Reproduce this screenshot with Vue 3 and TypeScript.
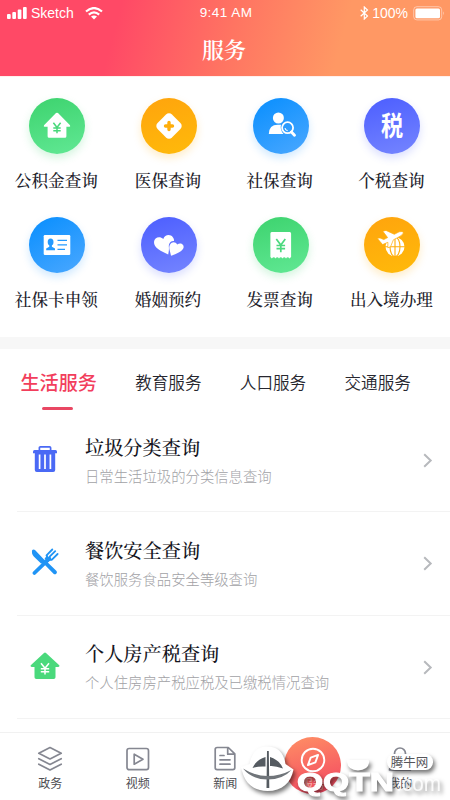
<script setup lang="ts">
import { ref } from 'vue'

interface Service {
  icon: string
  label: string
  tone: string
}

interface Entry {
  icon: string
  title: string
  desc: string
}

const services: Service[] = [
  { icon: 'house', label: '公积金查询', tone: 'green' },
  { icon: 'medical', label: '医保查询', tone: 'orange' },
  { icon: 'person', label: '社保查询', tone: 'blue' },
  { icon: 'tax', label: '个税查询', tone: 'indigo' },
  { icon: 'card', label: '社保卡申领', tone: 'blue' },
  { icon: 'hearts', label: '婚姻预约', tone: 'indigo' },
  { icon: 'receipt', label: '发票查询', tone: 'green' },
  { icon: 'travel', label: '出入境办理', tone: 'orange' },
]

const tabs = ['生活服务', '教育服务', '人口服务', '交通服务']
const activeTab = ref(0)

const entries: Entry[] = [
  { icon: 'trash', title: '垃圾分类查询', desc: '日常生活垃圾的分类信息查询' },
  { icon: 'food', title: '餐饮安全查询', desc: '餐饮服务食品安全等级查询' },
  { icon: 'home', title: '个人房产税查询', desc: '个人住房房产税应税及已缴税情况查询' },
]

const navItems = [
  { icon: 'layers', label: '政务' },
  { icon: 'video', label: '视频' },
  { icon: 'news', label: '新闻' },
  { icon: 'compass', label: '服务' },
  { icon: 'user', label: '我的' },
]
</script>

<template>
  <div class="screen">
    <header class="header">
      <div class="status">
        <div class="carrier">
          <svg class="signal" width="20" height="12" viewBox="0 0 20 12" fill="#fff">
            <rect x="0" y="7" width="3.7" height="5" rx="1" />
            <rect x="5.3" y="5" width="3.7" height="7" rx="1" />
            <rect x="10.7" y="2.6" width="3.7" height="9.4" rx="1" />
            <rect x="16" y="0" width="3.7" height="12" rx="1" />
          </svg>
          <span>Sketch</span>
          <svg class="wifi" width="18" height="13" viewBox="0 0 18 13" fill="none" stroke="#fff" stroke-width="2.2">
            <path d="M1 4.5Q9-2.4 17 4.5M3.8 7.6Q9 3 14.2 7.6" />
            <path d="M9 12.5L6 9.6Q9 7.4 12 9.6Z" fill="#fff" stroke="none" />
          </svg>
        </div>
        <span class="clock">9:41 AM</span>
        <div class="power">
          <svg width="9" height="14" viewBox="0 0 9 14" fill="none" stroke="#fff" stroke-width="1.2">
            <path d="M.7 3.8L7.5 10 4.3 13V1L7.5 4 .7 10.2" />
          </svg>
          <span>100%</span>
          <svg class="battery" width="32" height="15" viewBox="0 0 32 15">
            <rect x=".7" y=".7" width="28" height="13.2" rx="3.2" fill="none" stroke="#fff" stroke-opacity=".45" />
            <rect x="2.4" y="2.5" width="24.6" height="9.8" rx="1.5" fill="#fff" />
            <path d="M30.2 5.2Q31.8 7.3 30.2 9.4Z" fill="#fff" fill-opacity=".6" />
          </svg>
        </div>
      </div>
      <h1>服务</h1>
    </header>

    <section class="services">
      <div v-for="s in services" :key="s.label" class="service">
        <div class="disc" :class="s.tone">
          <svg width="56" height="56" viewBox="0 0 56 56" fill="#fff">
            <g v-if="s.icon === 'house'">
              <path d="M27 15.1Q28 14.2 29 15.1L41 27.2Q41.7 28.7 40.3 28.7H37.4V38.2Q37.4 39.7 35.9 39.7H20.1Q18.6 39.7 18.6 38.2V28.7H15.7Q14.3 28.7 15 27.2Z" />
              <path d="M24.4 24.8L28 29.5 31.6 24.8M28 29.5V35.3M24.3 30H31.7M24.3 32.8H31.7" fill="none" stroke="#48d87a" stroke-width="1.5" />
            </g>
            <g v-else-if="s.icon === 'medical'">
              <rect x="17.8" y="17.8" width="20.4" height="20.4" rx="4.2" transform="rotate(45 28 28)" />
              <path d="M28 24.5V31.5M24.5 28H31.5" stroke="#ffae0a" stroke-width="3.4" stroke-linecap="round" />
            </g>
            <g v-else-if="s.icon === 'person'">
              <circle cx="25.4" cy="20" r="5.5" />
              <path d="M15.8 36Q16 26.7 24.8 26.7H28Q26.7 31.5 30.5 36Z" />
              <circle cx="34.6" cy="29.7" r="5.5" fill="none" stroke="#fff" stroke-width="1.8" />
              <path d="M32 30Q32.3 32.2 34.6 32.6" fill="none" stroke="#fff" stroke-width="1.1" />
              <path d="M38.4 34L41.5 37.2" stroke="#fff" stroke-width="2.9" stroke-linecap="round" />
            </g>
            <g v-else-if="s.icon === 'tax'">
              <text class="tax-mark" transform="translate(28 37.7) scale(.82 1)" text-anchor="middle">税</text>
            </g>
            <g v-else-if="s.icon === 'card'">
              <rect x="14.7" y="18" width="26.6" height="20" rx="1.2" />
              <g fill="#249aff">
                <ellipse cx="21.6" cy="25" rx="2.9" ry="3.5" />
                <path d="M20.3 27H22.9V29.7L26 31.5V33.2H17.2V31.5L20.3 29.7Z" />
                <path d="M28.5 22.7H38V24.1H28.5ZM28.5 27.2H38V28.6H28.5ZM28.5 31.7H36V33.1H28.5Z" />
              </g>
            </g>
            <g v-else-if="s.icon === 'hearts'">
              <path d="M27.2 37.5C20.5 34.5 12.6 30.7 13 25C13.3 20.3 18.8 18.6 22.3 22C23.6 17.6 29.4 16.7 32 20.4C33 22 33.2 23.1 32.9 24C29.5 23.3 27.4 26.8 27.9 30.2C28.2 33 27.5 35.4 27.2 37.5Z" />
              <path d="M30 38.8C29.4 34.5 27.1 30.8 29.1 27.5C30.9 24.5 34.6 24.5 36.2 27.6C39.3 24.9 43.2 27.2 42.6 30.6C42 34.3 35.5 36.9 30 38.8Z" />
            </g>
            <g v-else-if="s.icon === 'receipt'">
              <path d="M18.7 15H36.8Q38.1 15 38.1 16.5V40L36.4 41.6Q34.8 38.7 33 41.6Q31.3 38.7 29.5 41.6Q27.8 38.7 26 41.6Q24.3 38.7 22.5 41.6Q20.8 38.7 18.9 41.6L17.4 40V16.5Q17.4 15 18.7 15Z" />
              <path d="M23.3 22L27.8 28 32.3 22M27.8 28V35.3M23.5 28.5H32.1M23.5 31.7H32.1" fill="none" stroke="#4cd97f" stroke-width="1.7" />
            </g>
            <g v-else>
              <circle cx="31" cy="29.8" r="9.5" />
              <g fill="none" stroke="#ffae0a" stroke-width="1.1">
                <path d="M31 20V40M21 29.8H41" />
                <ellipse cx="31" cy="29.8" rx="5" ry="9.8" />
              </g>
              <path d="M13.2 21.3L16 20.9 19.8 22.6 23.6 20.6 18.8 14.2 22 13.4 30.3 17.3 35.2 14.8Q39.2 13.6 39.4 15.9Q39 18 33.5 20.7L29.4 22.8 26.6 29.6 23.8 30.8 23.9 25.3 18.6 27.6Z" stroke="#ffae0a" stroke-width=".7" />
            </g>
          </svg>
        </div>
        <span class="service-label">{{ s.label }}</span>
      </div>
    </section>

    <div class="band"></div>

    <nav class="tabs">
      <button v-for="(t, i) in tabs" :key="t" class="tab" :class="{ active: i === activeTab }" @click="activeTab = i">
        {{ t }}
      </button>
    </nav>

    <main class="list">
      <article v-for="e in entries" :key="e.title" class="entry">
        <div class="entry-icon">
          <svg v-if="e.icon === 'trash'" width="26" height="28" viewBox="0 0 26 28" fill="#4a69f5">
            <path d="M7.4 5V2.8Q7.4 1.8 8.4 1.8H17.6Q18.6 1.8 18.6 2.8V5" fill="none" stroke="#4a69f5" stroke-width="1.7" />
            <path d="M2.5 5H23.5Q25 5 25 6.5V8.2H1V6.5Q1 5 2.5 5Z" />
            <path d="M2.8 8H23.2V25Q23.2 27 21.2 27H4.8Q2.8 27 2.8 25Z" />
            <path d="M7.6 9.6V24M13 9.6V24M18.4 9.6V24" stroke="#fff" stroke-width="1.7" />
          </svg>
          <svg v-else-if="e.icon === 'food'" width="28" height="28" viewBox="0 0 28 28" fill="#2094f5">
            <path d="M1.2 2Q2.7.9 4 2L12.8 11.2 16 13.7 25.5 23Q26.6 24.3 25.3 25.7Q23.9 27 22.5 25.7L12.5 15.5H10L2.8 8.6Q.2 5.5 1.2 2Z" />
            <path d="M3.4 25L18.3 10.6" stroke="#2094f5" stroke-width="3.8" stroke-linecap="round" />
            <path d="M15.5 7.4L21.3 1.5M18.4 8.9L24.2 3.1M20.7 11.8L26.6 6M16 7.5Q15.5 11.8 20.7 11.8" fill="none" stroke="#2094f5" stroke-width="1.8" stroke-linecap="round" />
            <path d="M15.5 7.8L20.3 11.8 17 14 13.5 11Z" />
          </svg>
          <svg v-else width="30" height="28" viewBox="0 0 30 28" fill="#4ad97c">
            <path d="M14 1.1Q15 .1 16 1.1L29 13Q30.2 14.7 28.3 14.9H25.5V25.2Q25.5 27 23.7 27H6.3Q4.5 27 4.5 25.2V14.9H1.7Q-.2 14.7 1 13Z" />
            <path d="M11 11.2L15 16.3 19 11.2M15 16.3V22.5M10.8 16.8H19.2M10.8 19.8H19.2" fill="none" stroke="#fff" stroke-width="1.5" />
          </svg>
        </div>
        <div class="entry-text">
          <h2>{{ e.title }}</h2>
          <p>{{ e.desc }}</p>
        </div>
        <svg class="chevron" width="10" height="15" viewBox="0 0 10 15" fill="none" stroke="#b7b9bd" stroke-width="2">
          <path d="M1.2 1.2L7.7 7.5 1.2 13.8" />
        </svg>
      </article>
    </main>

    <footer class="nav">
      <div v-for="n in navItems" :key="n.icon" class="nav-item" :class="{ current: n.icon === 'compass' }">
        <svg width="26" height="26" viewBox="0 0 26 26" fill="none" stroke="currentColor" stroke-width="1.7" stroke-linejoin="round" stroke-linecap="round">
          <path v-if="n.icon === 'layers'" d="M13 1.5L24.2 7.3 13 13 1.8 7.3ZM1.8 12.7L13 18.5 24.2 12.7M1.8 18.2L13 24 24.2 18.2" />
          <g v-else-if="n.icon === 'video'">
            <rect x="2" y="2.5" width="21.5" height="21.2" rx="2.2" />
            <path d="M9.2 8.2V18.2L18 13.2Z" />
          </g>
          <path v-else-if="n.icon === 'news'" d="M16.3 1.5H5.2Q3.2 1.5 3.2 3.5V21.8Q3.2 23.7 5.2 23.7H20.8Q22.8 23.7 22.8 21.8V7.8ZM15.7 1.8V8.2H22.5M8 9.5H12M8 13.8H18M8 18.2H18" />
          <g v-else-if="n.icon === 'compass'" stroke-width="1.9">
            <circle cx="13" cy="13" r="11.3" />
            <path d="M18.1 7.9L15.4 15.3 7.9 18.1 10.7 10.7Z" />
          </g>
          <g v-else>
            <circle cx="13" cy="7.5" r="5.5" />
            <path d="M2.5 24Q3 15.5 13 15.5T23.5 24Z" />
          </g>
        </svg>
        <span>{{ n.label }}</span>
      </div>
    </footer>

    <svg class="watermark" width="210" height="60" viewBox="240 740 210 60">
      <g class="shadowed" fill="#fff">
        <path d="M267 746.5C277 746.5 284 752 285.5 764L293.5 769.5C291 783 282 791 267.5 791C252 791 244 782 241 767L249.5 764C252 752 258 746.5 267 746.5Z" />
        <path d="M347 762Q346 759 350 760H366Q370 759 369 763Q368 770 358 770.5Q348 770 347 762Z" />
        <rect x="387" y="754" width="46" height="16" rx="7.5" />
        <text class="brand" x="297" y="790.5" textLength="97" lengthAdjust="spacingAndGlyphs">QQTN</text>
        <text class="dotcom" x="396" y="790.5" textLength="45" lengthAdjust="spacingAndGlyphs">.com</text>
      </g>
      <path d="M252.5 768Q256 760 265.5 757L265.5 766.5Q258 766 252.5 768ZM270 766Q275 765.5 283 768.5Q280 760.5 270 757ZM267 751H268.8L269.3 788H266.5Z" fill="#555b61" />
      <path d="M243 768.5Q255 776 267.5 776T291.5 770Q283 779.5 267.5 779.5T243 768.5Z" fill="#70757a" />
      <text class="site" x="409.5" y="767" text-anchor="middle">腾牛网</text>
    </svg>
  </div>
</template>

<style>
body {
  margin: 0;
  background: #fff;
}
</style>

<style scoped>
.screen {
  position: relative;
  display: flex;
  flex-direction: column;
  width: 450px;
  height: 800px;
  overflow: hidden;
  background: #fff;
  color: #22222b;
  font-family: "Noto Sans CJK SC", sans-serif;
}
.header {
  flex: none;
  height: 76px;
  background: linear-gradient(105deg, #ff4966 0%, #ff4966 26%, #ff7462 51%, #ff9864 75%, #ff9864 100%);
  border-bottom: 1px solid #fff0ed;
  color: #fff;
}
.status {
  display: grid;
  grid-template-columns: 1fr auto 1fr;
  align-items: center;
  height: 26px;
  padding: 0 5px 0 7px;
  font: 14px/26px "Liberation Sans", sans-serif;
}
.carrier,
.power {
  display: flex;
  align-items: center;
}
.carrier {
  gap: 4px;
}
.wifi {
  margin-left: 7px;
}
.clock {
  font-size: 13.5px;
  letter-spacing: 0.45px;
}
.power {
  justify-content: flex-end;
  gap: 3px;
}
.battery {
  margin-left: 2px;
}
h1,
.service-label,
h2 {
  font-family: "Noto Serif CJK SC", "Source Han Serif SC", "Noto Serif SC", "Noto Sans CJK SC", serif;
}
h1 {
  margin: 7px 0 0;
  padding-right: 2px;
  text-align: center;
  font-size: 22px;
  line-height: 32px;
  font-weight: 600;
}
.services {
  flex: none;
  box-sizing: border-box;
  display: grid;
  grid-template-columns: repeat(4, 111.7px);
  grid-auto-rows: 119px;
  height: 260px;
  padding: 21px 0 0 1.5px;
}
.service {
  display: flex;
  flex-direction: column;
  align-items: center;
}
.disc {
  width: 56px;
  height: 56px;
  border-radius: 50%;
}
.disc svg {
  display: block;
}
.green {
  background: linear-gradient(165deg, #3dd36e, #61e894);
  box-shadow: 0 4px 9px #3dd36e38;
}
.orange {
  background: linear-gradient(165deg, #ffa40d, #ffba0a);
  box-shadow: 0 4px 9px #ffae0a38;
}
.blue {
  background: linear-gradient(150deg, #078efe, #4ba8ff);
  box-shadow: 0 4px 9px #168fff33;
}
.indigo {
  background: linear-gradient(165deg, #4c5eff, #7585ff);
  box-shadow: 0 4px 9px #4c5eff33;
}
.tax-mark {
  font: 700 27px "Noto Sans CJK SC", sans-serif;
}
.service-label {
  margin-top: 14px;
  padding-right: 2px;
  font-size: 16.6px;
  line-height: 24px;
  font-weight: 500;
  white-space: nowrap;
}
.band {
  flex: none;
  height: 12px;
  background: #f7f7f7;
}
.tabs {
  flex: none;
  display: flex;
  align-items: center;
  gap: 38.3px;
  height: 60px;
  padding: 0 0 0 20.5px;
}
.tab {
  position: relative;
  height: 60px;
  margin: 0;
  padding: 6px 0 0;
  border: 0;
  background: none;
  color: #27272f;
  font: 350 16.6px/54px "Noto Sans CJK SC", sans-serif;
  white-space: nowrap;
}
.tab.active {
  color: #f23e5c;
  font-size: 19.1px;
  font-weight: 500;
}
.tab.active::after {
  content: "";
  position: absolute;
  left: 50%;
  bottom: -1px;
  width: 31px;
  height: 3px;
  margin-left: -17px;
  border-radius: 2px;
  background: #e94763;
}
.list {
  flex: none;
  height: 323px;
  padding-left: 17px;
}
.entry {
  box-sizing: border-box;
  display: flex;
  height: 103.3px;
  border-bottom: 1px solid #f3f3f3;
}
.entry-icon {
  flex: none;
  display: flex;
  justify-content: center;
  width: 56px;
  padding-top: 36px;
}
.entry-text {
  flex: 1;
  padding: 22.5px 0 0 12px;
}
h2 {
  margin: 0;
  color: #15151d;
  font-size: 19.2px;
  line-height: 30px;
  font-weight: 500;
}
p {
  margin: 3px 0 0;
  color: #a2a2a6;
  font-size: 14.37px;
  line-height: 22px;
  font-weight: 300;
}
.chevron {
  flex: none;
  margin: 44px 17px 0 0;
}
.nav {
  box-sizing: border-box;
  flex: none;
  display: grid;
  grid-template-columns: repeat(5, 87.5px);
  height: 68px;
  padding-left: 6.5px;
  border-top: 1px solid #f1f1f1;
}
.nav-item {
  display: flex;
  flex-direction: column;
  align-items: center;
  padding-top: 12.5px;
  color: #858791;
}
.nav-item span {
  margin-top: 2px;
  color: #4d4d52;
  font-size: 12px;
  line-height: 18px;
}
.current {
  justify-self: center;
  box-sizing: border-box;
  width: 57px;
  height: 57px;
  margin-top: 4px;
  padding-top: 9.5px;
  border-radius: 50%;
  background: linear-gradient(165deg, #ff9065, #f24361);
  color: #fff;
}
.current span {
  color: #ffb9b5;
}
.watermark {
  position: absolute;
  left: 240px;
  top: 740px;
}
.shadowed {
  filter: drop-shadow(2px 3px 2px #0008);
}
.brand {
  font: 700 25px "Liberation Sans", sans-serif;
  stroke: #fff;
  stroke-width: 1px;
}
.dotcom {
  font: 400 22px "Liberation Sans", sans-serif;
  fill-opacity: 0.85;
}
.site {
  font: 400 12.5px "Noto Sans CJK SC", sans-serif;
  fill: #55555a;
}
</style>
